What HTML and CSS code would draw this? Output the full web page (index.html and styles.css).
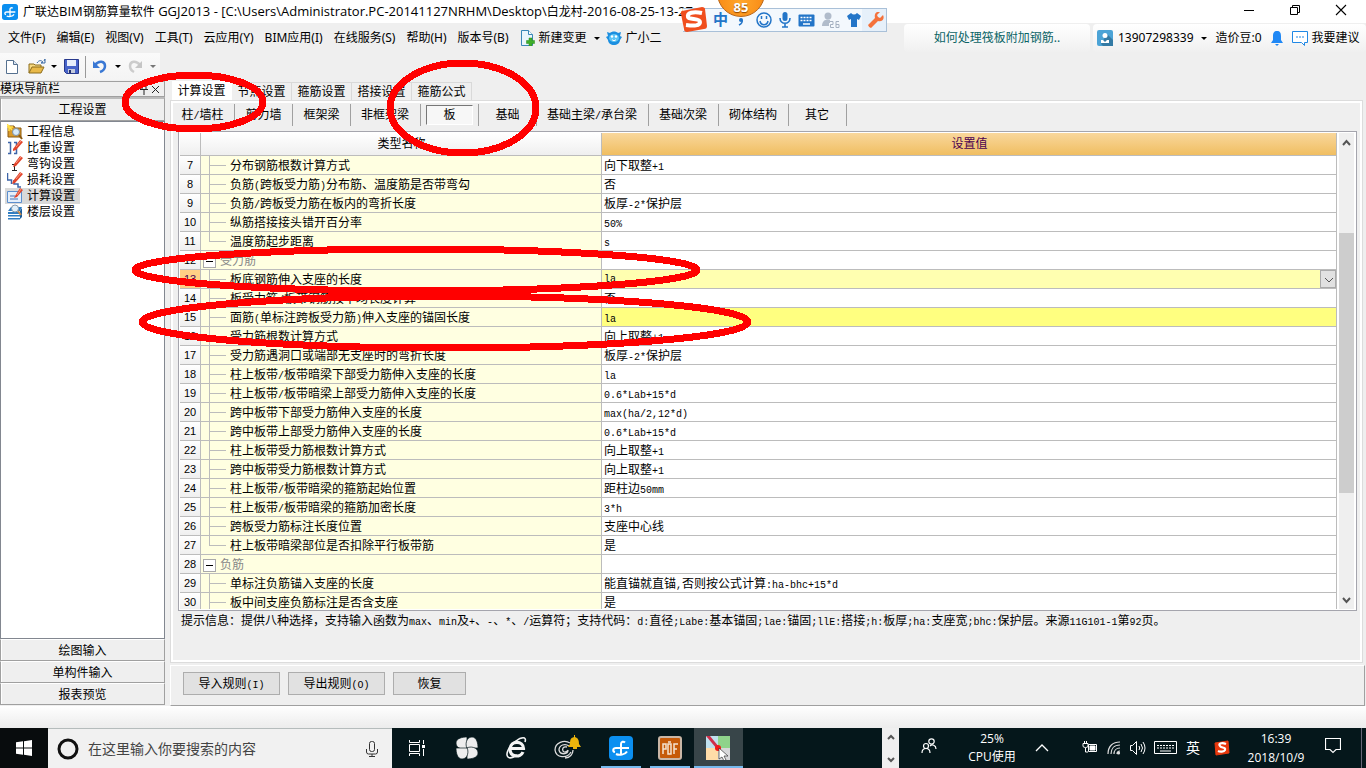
FILE: index.html
```html
<!DOCTYPE html>
<html lang="zh-CN">
<head>
<meta charset="utf-8">
<title>广联达BIM钢筋算量软件 GGJ2013</title>
<link rel="stylesheet" href="styles.css">
</head>
<body>
<header class="titlebar">
  <svg class="app-icon" viewBox="0 0 24 24" width="16" height="16"><rect width="24" height="24" rx="4" fill="#0b8ff0"/><path d="M12 18V8c0-2.500 2.500-3 4-1.500M20 12H7c-3.500 0-3.500 3.500-1 4M7 18c3 1.500 9 1 11-2.500" fill="none" stroke="#fff" stroke-width="2"/></svg>
  <h1>广联达<span>BIM</span>钢筋算量软件<span> GGJ2013 - [C:\Users\Administrator.PC-20141127NRHM\Desktop\</span>白龙村<span>-2016-08-25-13-27</span></h1>
  <div class="winbtns">
    <button aria-label="最小化"><svg width="12" height="12"><path d="M1 6.500h10" stroke="#000"/></svg></button>
    <button aria-label="还原"><svg width="12" height="12" fill="none" stroke="#000"><path d="M1.500 3.500h7v7h-7zM3.500 3.500v-2h7v7h-2"/></svg></button>
    <button aria-label="关闭"><svg width="12" height="12"><path d="M1 1l10 10M11 1L1 11" stroke="#000" stroke-width="1.100"/></svg></button>
  </div>
</header>

<nav class="menubar">
  <button>文件(F)</button><button>编辑(E)</button><button>视图(V)</button><button>工具(T)</button><button>云应用(Y)</button><button>BIM应用(I)</button><button>在线服务(S)</button><button>帮助(H)</button><button>版本号(B)</button>
  <button class="with-icon"><svg width="15" height="16"><path d="M1.500.5h7l4 4v11h-11z" fill="#eaf5fc" stroke="#3a87b8"/><path d="M8.500.5v4h4" fill="#fff" stroke="#3a87b8"/><path d="M9 8h3v2.500h2.500v3H12V16H9v-2.500H6.500v-3H9z" fill="#3fae2a" stroke="#2a8a1c" stroke-width=".5"/></svg>新建变更<i class="caret"></i></button>
  <button class="with-icon owl"><svg width="16" height="16"><path d="M1 2l3 1c2-2 6-2 8 0l3-1-1 4 2 1-2 3c0 3-3 5-6 5s-6-2-6-5L0 7l2-1z" fill="#1c8fe0"/><ellipse cx="8" cy="8" rx="5" ry="4" fill="#5cc4f5"/><circle cx="6" cy="6.500" r="1.200" fill="#fff"/><circle cx="10" cy="6.500" r="1.200" fill="#fff"/><path d="M6 9.500c1 1.500 3 1.500 4 0" stroke="#fff" fill="none"/></svg>广小二</button>
  <div class="tip"><a href="#">如何处理筏板附加钢筋..</a></div>
  <div class="account">
    <button class="user"><svg width="16" height="16"><rect width="16" height="16" rx="2" fill="#4ba3d6"/><path d="M10 4l6 6v6H6l-2-2z" fill="#347ba5"/><circle cx="8" cy="5.500" r="2.500" fill="#fff"/><path d="M4 13v-3h2l2 2 2-2h2v3z" fill="#fff"/></svg>13907298339<i class="caret"></i></button>
    <span class="beans">造价豆:0</span>
    <button aria-label="通知" class="bell"><svg width="12" height="16"><path d="M6 1c-3 0-4 2-4 5v4l-2 3h12l-2-3V6c0-3-1-5-4-5zM4 14h4l-2 2z" fill="#2088f5"/></svg></button>
    <button class="suggest"><svg width="17" height="16"><path d="M.5 1.500h15v11h-3v3l-3-3H.5z" fill="#fff" stroke="#2088e5"/><path d="M4 7h2m1 0h2m1 0h2" stroke="#2088e5"/></svg>我要建议</button>
  </div>
</nav>

<div class="toolrow"><div class="toolbar">
  <button aria-label="新建"><svg width="12" height="14"><path d="M.5.5h7l4 4v9H.5z" fill="#fff" stroke="#55708f"/><path d="M7.500.5v4h4" fill="#d8e4f2" stroke="#55708f"/></svg></button>
  <button aria-label="打开" class="open"><svg width="18" height="16"><path d="M1 14V5h5l1 1h6v3" fill="#f7d981" stroke="#8c6d1d"/><path d="M1 14l3-6h12l-3 6z" fill="#e9b949" stroke="#8c6d1d"/><path d="M9 4c2-3 4-3 6-1l-2 1h4V0l-1 2" fill="none" stroke="#3b6aa5"/></svg><i class="caret"></i></button>
  <button aria-label="保存" class="save"><svg width="15" height="15"><path d="M.5.5h14v14H2.500l-2-2z" fill="#4763c9" stroke="#28398c"/><path d="M3 1h9v6H3z" fill="#e8eefb"/><path d="M4 10h7v4H4z" fill="#c4cbdc"/><path d="M5 11h2v3H5z" fill="#23306f"/></svg></button>
  <span class="sep"></span>
  <button aria-label="撤销" class="undo"><svg width="14" height="14"><path d="M2 5c4-5 10-4 10 1 0 3-2 5-5 6" fill="none" stroke="#3a78d4" stroke-width="2.500"/><path d="M0 1v7h7z" fill="#3a78d4"/></svg><i class="caret"></i></button>
  <button aria-label="重做" class="undo redo" disabled><svg width="14" height="14"><path d="M12 5C8 0 2 1 2 6c0 3 2 5 4 6" fill="none" stroke="#ccc" stroke-width="2.500"/><path d="M14 1v7H7z" fill="#c6c6c6"/></svg><i class="caret"></i></button>
</div></div>

<main class="work">
  <aside class="side">
    <div class="side-head"><span>模块导航栏</span><svg width="28" height="14"><path d="M6 1v6M10 1v6M4 7.500h8M8 8v5M6 1.500h4" stroke="#222" fill="none"/><path d="M16 4l7 7M23 4l-7 7" stroke="#222"/></svg></div>
    <button class="side-btn first">工程设置</button>
    <ul class="tree">
      <li><svg width="16" height="16"><path d="M1 2h6l1 2h6v9H1z" fill="#d99a2b" stroke="#8b5a10"/><path d="M2 1v6M0 3h6M0 0l5 6" stroke="#ffe04a" stroke-width="1.500"/><circle cx="9" cy="8" r="3.500" fill="#d7ebfa" stroke="#7b8fa5"/><path d="M12 11l3 4" stroke="#8b5a10" stroke-width="2"/></svg>工程信息</li>
      <li><svg width="16" height="16"><path d="M1 2.500h2.500v11H1M7 2.500h2.500v11H7" stroke="#3d64a8" fill="none" stroke-width="1.500"/><path d="M6 9l7-9 3 2-7 8-3 1z" fill="#e2432a"/><path d="M9 7l5-6" stroke="#f79a80"/></svg>比重设置</li>
      <li><svg width="16" height="16"><path d="M5 8.500h5M7.500 9v5M5 14.500h5" stroke="#222" fill="none"/><path d="M7 8l6-8 3 2-7 8-3 1z" fill="#e2432a"/><path d="M9 7l5-6" stroke="#f79a80"/></svg>弯钩设置</li>
      <li><svg width="16" height="16"><path d="M.5 1v7h4v4M7 8v4h4v3h3" stroke="#3d64a8" fill="none" stroke-width="1.500"/><path d="M6 9l7-9 3 2-8 9-3 1z" fill="#e2432a"/><path d="M9 7l5-6" stroke="#f79a80"/></svg>损耗设置</li>
      <li class="active"><svg width="16" height="16"><path d="M.5 3.500h14v11H.5z" fill="#e4effb" stroke="#5c8fce"/><path d="M3 8h5M3 11h8" stroke="#4873b5"/><path d="M8 8l5-8 3 2-6 7-3 1z" fill="#e2432a"/><path d="M10 7l4-6" stroke="#f79a80"/></svg>计算设置</li>
      <li><svg width="16" height="16"><path d="M1 7l3-4h11l-2 4zM1 8h12v2H1zM1 11h12v1.500H1zM1 14h12v1.500H1z" fill="#2f7dc2"/><path d="M13 7l2-3v9l-2 2z" fill="#1b5d9c"/><circle cx="8" cy="4.500" r="3.500" fill="#e0f0fb" stroke="#8899aa"/><path d="M11 7l3 4" stroke="#c58b4e" stroke-width="2"/></svg>楼层设置</li>
    </ul>
    <button class="side-btn">绘图输入</button>
    <button class="side-btn">单构件输入</button>
    <button class="side-btn">报表预览</button>
  </aside>

  <section class="content">
    <div class="tabs"><button class="on">计算设置</button><button>节点设置</button><button>箍筋设置</button><button>搭接设置</button><button>箍筋公式</button></div>
    <div class="panel">
      <div class="subtabs"><button>柱<i>/</i>墙柱</button><button>剪力墙</button><button>框架梁</button><button>非框架梁</button><button class="on"><span>板</span></button><button>基础</button><button>基础主梁<i>/</i>承台梁</button><button>基础次梁</button><button>砌体结构</button><button>其它</button></div>
      <div class="grid">
        <div class="grid-view">
        <table>
          <colgroup><col class="c-no"><col class="c-name"><col></colgroup>
          <thead><tr><th></th><th>类型名称</th><th class="val">设置值</th></tr></thead>
          <tbody>
            <tr><th>7</th><td>分布钢筋根数计算方式</td><td>向下取整<i>+1</i></td></tr>
            <tr><th>8</th><td>负筋<i>(</i>跨板受力筋<i>)</i>分布筋、温度筋是否带弯勾</td><td>否</td></tr>
            <tr><th>9</th><td>负筋<i>/</i>跨板受力筋在板内的弯折长度</td><td>板厚<i>-2*</i>保护层</td></tr>
            <tr><th>10</th><td>纵筋搭接接头错开百分率</td><td><i>50%</i></td></tr>
            <tr class="last"><th>11</th><td>温度筋起步距离</td><td><i>s</i></td></tr>
            <tr class="group"><th>12</th><td><button class="fold" aria-label="折叠"></button>受力筋</td><td></td></tr>
            <tr class="current"><th>13</th><td>板底钢筋伸入支座的长度</td><td><div class="combo"><select aria-label="板底钢筋伸入支座的长度"><option>la</option></select><svg width="16" height="18"><path d="M4 7l4 4 4-4" fill="none" stroke="#555"/></svg></div></td></tr>
            <tr><th>14</th><td>板受力筋<i>/</i>板带钢筋按平均长度计算</td><td>否</td></tr>
            <tr class="marked"><th>15</th><td>面筋<i>(</i>单标注跨板受力筋<i>)</i>伸入支座的锚固长度</td><td><i>la</i></td></tr>
            <tr><th>16</th><td>受力筋根数计算方式</td><td>向上取整<i>+1</i></td></tr>
            <tr><th>17</th><td>受力筋遇洞口或端部无支座时的弯折长度</td><td>板厚<i>-2*</i>保护层</td></tr>
            <tr><th>18</th><td>柱上板带<i>/</i>板带暗梁下部受力筋伸入支座的长度</td><td><i>la</i></td></tr>
            <tr><th>19</th><td>柱上板带<i>/</i>板带暗梁上部受力筋伸入支座的长度</td><td><i>0.6*Lab+15*d</i></td></tr>
            <tr><th>20</th><td>跨中板带下部受力筋伸入支座的长度</td><td><i>max(ha/2,12*d)</i></td></tr>
            <tr><th>21</th><td>跨中板带上部受力筋伸入支座的长度</td><td><i>0.6*Lab+15*d</i></td></tr>
            <tr><th>22</th><td>柱上板带受力筋根数计算方式</td><td>向上取整<i>+1</i></td></tr>
            <tr><th>23</th><td>跨中板带受力筋根数计算方式</td><td>向上取整<i>+1</i></td></tr>
            <tr><th>24</th><td>柱上板带<i>/</i>板带暗梁的箍筋起始位置</td><td>距柱边<i>50mm</i></td></tr>
            <tr><th>25</th><td>柱上板带<i>/</i>板带暗梁的箍筋加密长度</td><td><i>3*h</i></td></tr>
            <tr><th>26</th><td>跨板受力筋标注长度位置</td><td>支座中心线</td></tr>
            <tr class="last"><th>27</th><td>柱上板带暗梁部位是否扣除平行板带筋</td><td>是</td></tr>
            <tr class="group"><th>28</th><td><button class="fold" aria-label="折叠"></button>负筋</td><td></td></tr>
            <tr><th>29</th><td>单标注负筋锚入支座的长度</td><td>能直锚就直锚<i>,</i>否则按公式计算<i>:ha-bhc+15*d</i></td></tr>
            <tr><th>30</th><td>板中间支座负筋标注是否含支座</td><td>是</td></tr>
          </tbody>
        </table>
        </div>
        <div class="scroll"><svg width="15" height="20"><path d="M4 12l3.500-4 3.500 4" fill="none" stroke="#555" stroke-width="2"/></svg><div class="track"><div class="thumb"></div></div><svg width="15" height="20"><path d="M4 9l3.500 4L11 9" fill="none" stroke="#555" stroke-width="2"/></svg></div>
      </div>
      <p class="hint">提示信息：提供八种选择，支持输入函数为<i>max</i>、<i>min</i>及<i>+</i>、<i>-</i>、<i>*</i>、<i>/</i>运算符；支持代码：<i>d:</i>直径<i>;Labe:</i>基本锚固<i>;lae:</i>锚固<i>;llE:</i>搭接<i>;h:</i>板厚<i>;ha:</i>支座宽<i>;bhc:</i>保护层。来源<i>11G101-1</i>第<i>92</i>页。</p>
    </div>
    <div class="actions"><button>导入规则<i>(I)</i></button><button>导出规则<i>(O)</i></button><button class="short">恢复</button></div>
  </section>
</main>
<div class="statusbar"></div>

<footer class="taskbar">
  <button class="start" aria-label="开始"><svg width="16" height="16"><path d="M0 2.300l7-1v6.200H0zM8 1.200L16 0v7.500H8zM0 8.500h7v6.200l-7-1zM8 8.500h8V16l-8-1.200z" fill="#fff"/></svg></button>
  <label class="search"><svg width="22" height="22"><circle cx="11" cy="11" r="9" fill="none" stroke="#111" stroke-width="3"/></svg><input type="text" placeholder="在这里输入你要搜索的内容" aria-label="搜索"><svg width="14" height="18"><rect x="4.500" y="1.500" width="5" height="10" rx="2" fill="none" stroke="#333"/><path d="M1.500 9v3q0 2 2 2h7q2 0 2-2V9M7 14v3M4 16.500h6" fill="none" stroke="#333"/></svg></label>
  <button class="task" aria-label="任务视图"><svg width="18" height="16" fill="none" stroke="#fff"><path d="M1.500 4.500h10v7h-10zM1.500 0v2.500h10V0M1.500 16v-2.500h10V16M15.500 0v4M15.500 9v7"/><path d="M14 5h3v3h-3z" fill="#fff" stroke="none"/></svg></button>
  <button class="task" aria-label="浏览器"><svg width="22" height="22" fill="#eee" stroke="#05171b" stroke-width=".7"><path d="M11 11C8 13 0 12 0 6 0 1 7 0 11 0z"/><path d="M11 11C9 8 10 0 16 0c5 0 6 7 6 11z"/><path d="M11 11c3-2 11-1 11 5 0 5-7 6-11 6z"/><path d="M11 11c2 3 1 11-5 11-5 0-6-7-6-11z"/></svg></button>
  <button class="task" aria-label="Internet Explorer"><svg width="24" height="24" fill="none" stroke="#f4f4f4"><path d="M5.500 12.500h13c0-8-13-8.500-13.500.5 0 8.500 10.500 9 13 3" stroke-width="3.200"/><path d="M20 6c2-6-4-5-9-1C4 10 0 18 3 21c2 2 6 0 9-2" stroke-width="1.600"/></svg></button>
  <button class="task" aria-label="浏览器助手"><svg width="28" height="26" fill="none"><path d="M17 8C11 4 2 8 2 15c1 8 12 9 16 2M16 11c-4-3-10-1-10 4 1 5 9 5 9 0M14 12c-4-1-5 2-4 4 1 2 4 1 5-1M12 23c5 0 8-4 8-8" stroke="#ddd" stroke-width="1.300"/><path d="M15 12l2-3c0-5 1-6 4-7V0h1v2c3 1 4 3 4 7l2 3z" fill="#ecb40c"/><path d="M20 13h4" stroke="#ecb40c" stroke-width="2"/></svg></button>
  <button class="task run lead" aria-label="广联达"><svg width="24" height="24"><rect width="24" height="24" rx="4" fill="#0b8ff0"/><path d="M12 18V8c0-2.500 2.500-3 4-1.500M20 12H7c-3.500 0-3.500 3.500-1 4M7 18c3 1.500 9 1 11-2.500" fill="none" stroke="#fff" stroke-width="2"/></svg></button>
  <button class="task run" aria-label="PDF"><svg width="24" height="24"><rect x="1" y="1" width="22" height="22" rx="2" fill="#c65a08" stroke="#c9b6a6" stroke-width="2"/><g fill="none" stroke="#f5e3cf" stroke-width="1.500"><path d="M5 18V8h3v5H5M10 8v10h3V8zM10 6h3M20 8h-4v10M16 13h3"/></g></svg></button>
  <button class="task run current" aria-label="画图"><svg width="26" height="24"><path d="M0 0h12v12H0z" fill="#bfe0ee"/><path d="M12 0h12v12H12z" fill="#8fd38b"/><path d="M0 12h12v12H0z" fill="#ffdca8"/><path d="M12 12h12v12H12z" fill="#d8d8da"/><path d="M0 0h4l9 11-2 2z" fill="#cf2e4a"/><circle cx="12" cy="12" r="3" fill="#f01818"/><path d="M13 12v11l3-2 2 4 2-1-2-4h4z" fill="#fff" stroke="#333" stroke-width=".7"/></svg></button>
  <div class="spin"><svg width="10" height="32" fill="none" stroke="#555" stroke-width="2"><path d="M2 7l3-3 3 3M2 26l3 3 3-3"/></svg></div>
  <div class="tray">
    <button class="people" aria-label="人脉"><svg width="16" height="16" fill="none" stroke="#fff" stroke-width="1.200"><circle cx="10.500" cy="3.500" r="2.700"/><circle cx="5" cy="8" r="2.500"/><path d="M1 15c0-6 8-6 8 0M9 8c2-2 6-1 6 3"/></svg></button>
    <div class="cpu">25%<br>CPU使用</div>
    <button class="more" aria-label="更多"><svg width="14" height="8"><path d="M1 7l6-6 6 6" fill="none" stroke="#fff" stroke-width="1.300"/></svg></button>
    <span class="ic"><svg width="16" height="14" fill="none" stroke="#fff"><path d="M1 2.500h5v3q-1 1-2.500 1T1 5.500zM2.500 0v2M4.500 0v2M3.500 7v4H6"/><path d="M6.500 3.500h8v7h-8z"/><path d="M8 5h5v4H8z" fill="#fff"/></svg></span>
    <span class="ic"><svg width="14" height="14" fill="none" stroke="#ddd" stroke-width="1.200"><path d="M1 13C1 5 6 1 13 1M4 13c0-5 3-9 9-9M7 13c0-3 2-6 6-6M10 13c0-2 1-3 3-3"/><circle cx="11.500" cy="12" r="1" fill="#fff"/></svg></span>
    <span class="ic"><svg width="16" height="14" fill="none" stroke="#fff"><path d="M.5 4.500h2l4-4v13l-4-4h-2zM9 5q1.500 2 0 4M11 3q3 4 0 8M13 1q4 6 0 12"/></svg></span>
    <span class="ic kb"><svg width="23" height="14" fill="none" stroke="#fff"><path d="M.5.500h22v12H.5z"/><path d="M3 4.500h17M3 7h17" stroke-dasharray="2 1"/><path d="M6 10h11"/></svg></span>
    <span class="lang">英</span>
    <span class="sogou"><svg width="16" height="16"><path d="M1 3l13-2 1 12-13 2z" fill="#e8380d" stroke="#e8380d"/><path d="M12 4c-5-2-8 0-6 2 1 2 6 1 5 4-1 2-5 2-7 1" fill="none" stroke="#fff" stroke-width="2.200"/></svg></span>
    <time class="clock">16:39<br>2018/10/9</time>
    <button class="note" aria-label="通知中心"><svg width="16" height="16"><path d="M.5.500h15v11H11l-3 3-3-3H.5z" fill="none" stroke="#fff" stroke-width="1.200"/></svg></button>
    <span class="edge"></span>
  </div>
</footer>

<div class="ime">
  <svg class="s-logo" width="30" height="30" viewBox="0 0 30 30"><path d="M2 6l20-4c2 0 3 1 3 2l2 17c0 2-1 3-3 3L7 27c-2 0-3-1-3-3L1 9c0-2 0-3 1-3z" fill="#f04e1e"/><path d="M22 8C13 6 7 8 8 12c1 3 12 1 12 5 0 4-6 4-14 3" fill="none" stroke="#fff" stroke-width="4"/></svg>
  <b>中</b><svg class="comma" width="14" height="16"><circle cx="6" cy="8" r="2" fill="#2375c8"/><path d="M7 8q1 3-3 5" fill="none" stroke="#2375c8" stroke-width="1.500"/></svg>
  <svg width="16" height="16" fill="none" stroke="#2375c8" stroke-width="1.500"><circle cx="8" cy="8" r="7"/><path d="M4 9c1 5 7 5 8 0"/><path d="M5.500 4v3M10.500 4v3"/></svg>
  <svg width="12" height="16"><rect x="3.500" width="5" height="9" rx="2.500" fill="#2375c8"/><path d="M1 6c0 7 10 7 10 0M6 11v4M3 15h6" fill="none" stroke="#2375c8" stroke-width="1.600"/></svg>
  <svg width="17" height="13"><rect x=".5" y=".5" width="16" height="12" rx="1" fill="#2375c8"/><path d="M2.500 3.500h12M2.500 6.500h12" stroke="#fff" stroke-width="1.500" stroke-dasharray="2 1"/><path d="M5 10h7" stroke="#fff" stroke-width="1.500"/></svg>
  <svg width="18" height="16"><circle cx="6" cy="4" r="3.500" fill="#b1bccb"/><path d="M0 14c0-8 9-8 12-3v3z" fill="#b1bccb"/><path d="M8 9.500h3v3H8.500v3H12M17 9.500h-3v6h3v-3h-3" fill="none" stroke="#f4f8fc" stroke-width="3"/><path d="M8 9.500h3v3H8.500v3H12M17 9.500h-3v6h3v-3h-3" fill="none" stroke="#a5b1c1"/></svg>
  <svg width="14" height="14"><path d="M4 0q3 3 6 0l4 3-2 4-2-1v8H4V6L2 7 0 3z" fill="#2375c8"/></svg>
  <svg width="16" height="16"><path d="M15 3l-3 3-2-1-1-2 3-3C8-1 6 2 7 6l-7 7q1 3 3 3l7-7c4 1 7-2 5-6z" fill="#f4723c"/></svg>
</div>
<div class="ball">85</div>

<svg class="marks" width="1366" height="768" shape-rendering="crispEdges" fill="none" stroke="#f00" stroke-width="7">
  <ellipse cx="194" cy="102" rx="69" ry="27"/>
  <ellipse cx="463" cy="108" rx="73" ry="45"/>
  <ellipse cx="416" cy="270" rx="281" ry="21"/>
  <ellipse cx="445" cy="322" rx="303" ry="26"/>
</svg>
</body>
</html>
```
FILE: styles.css
```css
* { box-sizing: border-box; }
body {
  margin: 0;
  height: 100vh;
  display: flex;
  flex-direction: column;
  overflow: hidden;
  position: relative;
  background: #efefef;
  color: #000;
  font: 12px/16px "Liberation Sans", "Noto Sans CJK SC", sans-serif;
}
button, input, select { font: inherit; color: inherit; }
button { border: 0; background: none; padding: 0; white-space: nowrap; }
svg { flex: none; }
i { font-style: normal; line-height: 0; }
table i, .subtabs i, .hint i, .actions i, .combo select { font-family: "Liberation Mono", monospace; font-size: 10px; }
.caret {
  display: inline-block;
  border: 3px solid transparent;
  border-top-color: #000;
  border-bottom: 0;
}

.titlebar {
  flex: none;
  height: 23px;
  display: flex;
  align-items: center;
  padding: 0 2px;
  background: #fff;
  font-family: "Noto Sans", "Noto Sans CJK SC", sans-serif;
}
.titlebar h1 { margin: 0 0 0 5px; font-size: 12px; font-weight: 400; white-space: nowrap; flex: 1; }
.titlebar h1 span { font-family: "Open Sans", sans-serif; font-size: 13px; line-height: 0; }
.winbtns { display: flex; }
.winbtns button { width: 46px; height: 20px; }

.menubar {
  flex: none;
  height: 30px;
  display: flex;
  align-items: center;
  gap: 11px;
  padding-left: 8px;
  font-family: "Noto Sans", "Noto Sans CJK SC", sans-serif;
}
.with-icon { display: flex; align-items: center; gap: 4px; }
.with-icon .caret { margin-left: 3px; }
.owl { margin-left: -5px; }
.tip, .account { height: 28px; display: flex; align-items: center; background: linear-gradient(#fff, #f0f0f0); border-radius: 4px; }
.tip { width: 186px; justify-content: center; margin-left: auto; margin-right: -8px; }
.tip a { color: #0a6466; text-decoration: none; }
.account { width: 273px; padding: 0 4px; }
.account button { display: flex; align-items: center; }
.user { gap: 5px; }
.user .caret { margin-left: 2px; }
.beans { margin-left: 9px; }
.bell { margin-left: 9px; }
.suggest { gap: 3px; margin-left: 9px; }

.toolrow { flex: none; height: 28px; }
.toolbar { width: 160px; height: 27px; display: flex; align-items: center; padding-left: 6px; background: linear-gradient(#fafafa, #f4f4f4); }
.toolbar button { display: flex; align-items: center; }
.open { margin-left: 10px; gap: 5px; }
.save { margin-left: 7px; }
.sep { width: 1px; height: 22px; background: #999; margin: 0 7px 0 6px; }
.undo { gap: 8px; }
.redo { margin-left: 7px; }
.redo .caret { border-top-color: #777; }

.work { flex: 1; min-height: 0; display: flex; gap: 5px; }
.side { width: 165px; flex: none; display: flex; flex-direction: column; padding-bottom: 1px; }
.side-head { height: 16px; display: flex; justify-content: space-between; align-items: center; border: 1px solid #a0a0a0; border-left: 0; line-height: 14px; }
.side-btn { height: 22px; border: 1px solid #a0a0a0; border-top-color: #fff; box-shadow: inset 1px 0 #fff; background: #efefef; padding-top: 1px; }
.side-btn.first { height: 24px; border-top: 2px solid #bbb; }
.tree { flex: 1; margin: 0; padding: 2px 0 0 4px; list-style: none; background: #fff; border: 1px solid #828790; }
.tree li { width: 75px; height: 16px; display: flex; align-items: center; gap: 4px; padding-left: 2px; white-space: nowrap; }
.tree .active { background: #d9d9d9; }

.content { flex: 1; min-width: 0; display: flex; flex-direction: column; padding-right: 1px; }
.tabs { height: 19px; flex: none; display: flex; padding-left: 2px; align-items: flex-end; }
.tabs button { width: 60px; height: 18px; border: 1px solid #d9d9d9; border-left: 0; border-bottom: 0; }
.tabs .on { height: 19px; background: #fff; border-color: #fff; }
.panel { flex: 1; min-height: 0; margin-right: 2px; display: flex; flex-direction: column; border: 1px solid #dcdcdc; outline: 2px solid #fff; outline-offset: -3px; padding: 3px 5px 3px 3px; }
.subtabs { height: 22px; flex: none; display: flex; }
.subtabs button { min-width: 58px; padding: 0 10px; border-right: 1px solid #a0a0a0; }
.subtabs button:nth-child(n+7) { padding-right: 11px; }
.subtabs button:first-child { min-width: 61px; padding: 0 10px 0 7px; }
.subtabs button:nth-child(4) { padding-right: 11px; }
.subtabs .on { padding: 0 5px; }
.subtabs .on span { display: block; height: 20px; line-height: 18px; background: #f7f7f7; border: 1px solid #777; border-right-color: #fff; border-bottom-color: #fff; }
.grid { flex: 1; min-height: 0; margin: 5px 0 0 4px; display: flex; background: #fff; border: 1px solid #a5a5ad; padding: 1px; }
.grid-view { flex: 1; min-width: 0; overflow: hidden; }
table { width: 100%; table-layout: fixed; border-collapse: separate; border-spacing: 0; }
.c-no { width: 21px; }
.c-name { width: 401px; }
th, td { height: 19px; padding: 0 1px 0 2px; border: solid #bcbcbc; border-width: 0 1px 1px 0; white-space: nowrap; line-height: 15px; font-weight: 400; }
thead th { height: 23px; background: linear-gradient(#fff, #efefef); }
thead .val { background: linear-gradient(#f9d79c, #f0be61); color: #4b0050; }
tbody th { padding: 0; background: linear-gradient(#fff, #efefef); text-align: center; font-size: 11px; }
tbody td { padding-top: 2px; }
td:nth-child(2) {
  padding-left: 29px;
  background:
    linear-gradient(#bcbcbc, #bcbcbc) 8px 0 / 1px 100% no-repeat,
    linear-gradient(#bcbcbc, #bcbcbc) 8px 9px / 17px 1px no-repeat,
    #ffffe1;
}
.last td:nth-child(2) { background-size: 1px 10px, 17px 1px, auto; }
.group td:nth-child(2) { padding-left: 2px; background: #ffffe1; color: #888; }
.fold { width: 13px; height: 13px; margin-right: 4px; vertical-align: middle; border: 1px solid #aaa; background: linear-gradient(#000, #000) 2px 5px / 7px 1px no-repeat #fff; }
.current th { background: #ffcf85; color: #4b0050; }
.current td:last-child { background: #ffffb0; padding: 0; }
.marked td:last-child { background: #ffff80; }
.combo { display: flex; height: 18px; }
.combo select { flex: 1; appearance: none; border: 0; background: none; padding: 0 2px; }
.combo svg { border: 1px solid #aaa; background: #e1e1e1; }
.scroll { width: 18px; flex: none; display: flex; flex-direction: column; align-items: center; background: #efefef; border: solid #fff; border-width: 0 1px 0 2px; }
.track { flex: 1; width: 15px; display: grid; grid-template-rows: 80fr 262fr 96fr; }
.thumb { grid-row: 2; background: #cdcdcd; }
.hint { flex: none; height: 48px; margin: 0; padding: 2px 0 0 7px; white-space: nowrap; overflow: hidden; }
.actions { flex: none; height: 41px; margin-top: 2px; display: flex; align-items: flex-start; gap: 8px; padding: 6px 12px; border: 1px solid #a0a0a0; border-top-color: #fff; border-left-color: #fff; }
.actions button { width: 97px; height: 23px; background: #e1e1e1; border: 1px solid #adadad; }
.actions .short { width: 73px; }
.statusbar { flex: none; height: 22px; background: linear-gradient(#fff, #ececec); }

.taskbar { flex: none; height: 40px; display: flex; background: #05171b; color: #fff; font-family: "Open Sans", "Noto Sans CJK SC", sans-serif; }
.start { width: 48px; background: #080c0d; display: grid; place-items: center; }
.search { width: 344px; display: flex; align-items: center; padding: 0 13px 0 9px; background: #f1f1f1; border-top: 1px solid #b5bcbc; }
.search input { flex: 1; min-width: 0; border: 0; background: none; padding: 0 0 0 9px; font-size: 14px; color: #333; }
.search input::placeholder { color: #444; opacity: 1; }
.task { width: 50px; display: grid; place-items: center; }
.run { width: 49px; background: linear-gradient(#76b9ed, #76b9ed) center bottom / 40px 2px no-repeat; }
.run.lead { margin-left: 4px; }
.run.current { background: linear-gradient(#76b9ed, #76b9ed) center bottom / 100% 2px no-repeat #384549; }
.spin { width: 17px; margin-left: auto; background: #efefef; display: grid; place-items: center; }
.tray { width: 467px; display: flex; align-items: center; }
.tray > * { flex: none; text-align: center; }
.people { width: 60px; }
.cpu { width: 66px; line-height: 18px; }
.more { width: 34px; margin-right: 19px; }
.ic, .lang, .sogou { width: 24px; display: flex; justify-content: center; }
.kb { width: 30px; }
.lang { width: 26px; font-size: 14px; }
.sogou { width: 32px; }
.clock { width: 76px; line-height: 19px; }
.note { width: 38px; }
.edge { height: 40px; width: 1px; margin-left: 9px; background: #667; }

.ime { position: absolute; left: 683px; top: 8px; width: 204px; height: 24px; display: flex; align-items: center; gap: 7px; padding-left: 30px; background: linear-gradient(90deg, #f3f8fd 88%, #e6f0fa 88%); border: 1px solid #a9c0d8; border-left: 0; color: #2375c8; }
.ime b { font-size: 15px; }
.s-logo { position: absolute; left: -3px; top: -4px; }
.ball { position: absolute; left: 717px; top: -31px; width: 48px; height: 48px; border-radius: 50%; border: 1px solid #b7651a; background: radial-gradient(circle at 50% 70%, #ffa62b, #f47a08); color: #fff; font: bold 13px/16px "Open Sans", sans-serif; text-align: center; padding-top: 29px; text-shadow: 0 1px 1px #8a4300; }
.marks { position: absolute; left: 0; top: 0; pointer-events: none; }
```
